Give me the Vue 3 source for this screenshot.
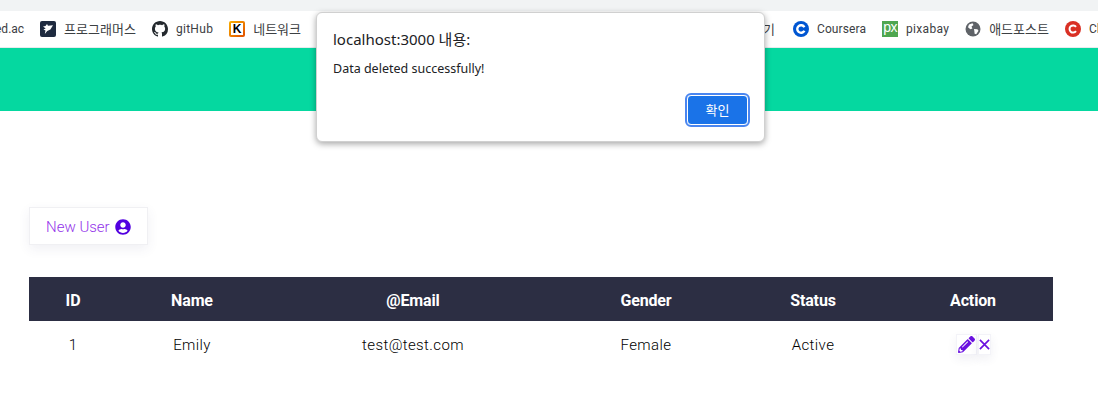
<script setup>
const leftMarks = [
  { icon: 'prog', label: '프로그래머스' },
  { icon: 'github', label: 'gitHub' },
  { icon: 'k', label: '네트워크' },
]
const rightMarks = [
  { icon: 'coursera', label: 'Coursera' },
  { icon: 'px', label: 'pixabay' },
  { icon: 'globe', label: '애드포스트' },
  { icon: 'red', label: 'Cl' },
]
const columns = ['ID', 'Name', '@Email', 'Gender', 'Status', 'Action']
const users = [
  { id: 1, name: 'Emily', email: 'test@test.com', gender: 'Female', status: 'Active' },
]
function labelClass(m) {
  return { kr: /[가-힣]/.test(m.label), loose: m.icon === 'github' || m.icon === 'px', 'loose-sm': m.icon === 'coursera' }
}
</script>

<template>
  <div class="page">
    <div class="tabstrip"></div>

    <nav class="bookmarks">
      <span class="cut">ed.ac</span>
      <div class="mark" v-for="m in leftMarks" :key="m.label">
        <span class="fav">
          <svg v-if="m.icon === 'prog'" viewBox="0 0 16 16" width="16" height="16">
            <rect width="16" height="16" rx="2" fill="#1e2a3f" />
            <path d="M3 5.5l2.5-.6L7 3l1 1.8 5-.6-2.6 4.3-3.2 1.5-2.4 3 .7-3.4L3.4 8.4l2.3-.8z" fill="#fff" />
          </svg>
          <svg v-else-if="m.icon === 'github'" viewBox="0 0 16 16" width="16" height="16">
            <path fill="#24292e" d="M8 0C3.58 0 0 3.58 0 8c0 3.54 2.29 6.53 5.47 7.59.4.07.55-.17.55-.38 0-.19-.01-.82-.01-1.49-2.01.37-2.53-.49-2.69-.94-.09-.23-.48-.94-.82-1.13-.28-.15-.68-.52-.01-.53.63-.01 1.08.58 1.23.82.72 1.21 1.87.87 2.33.66.07-.52.28-.87.51-1.07-1.78-.2-3.64-.89-3.64-3.95 0-.87.31-1.59.82-2.15-.08-.2-.36-1.02.08-2.12 0 0 .67-.21 2.2.82.64-.18 1.32-.27 2-.27.68 0 1.36.09 2 .27 1.53-1.04 2.2-.82 2.2-.82.44 1.1.16 1.92.08 2.12.51.56.82 1.27.82 2.15 0 3.07-1.87 3.75-3.65 3.95.29.25.54.73.54 1.48 0 1.07-.01 1.93-.01 2.2 0 .21.15.46.55.38A8.013 8.013 0 0016 8c0-4.42-3.58-8-8-8z" />
          </svg>
          <span v-else class="fav-k">K</span>
        </span>
        <span :class="labelClass(m)">{{ m.label }}</span>
      </div>
      <span class="spacer"></span>
      <span class="cut-end kr">기</span>
      <div class="mark" v-for="m in rightMarks" :key="m.label">
        <span class="fav">
          <svg v-if="m.icon === 'coursera'" viewBox="0 0 16 16" width="16" height="16">
            <circle cx="8" cy="8" r="8" fill="#0056d2" />
            <path d="M11.4 9.8a3.8 3.8 0 1 1 0-3.6" fill="none" stroke="#fff" stroke-width="2.4" />
          </svg>
          <span v-else-if="m.icon === 'px'" class="fav-px">px</span>
          <svg v-else-if="m.icon === 'globe'" viewBox="0 0 16 16" width="16" height="16">
            <circle cx="8" cy="8" r="7.5" fill="#5f6368" />
            <path d="M4 3.5l3.5-1.2 1 1.7-2 1.6.9 1.8-2 .8-2.4-2zM9 8l3.4.3 1.1 1.5-2.3 3.4-1.6-.4-.2-2.3z" fill="#fff" />
          </svg>
          <svg v-else viewBox="0 0 16 16" width="16" height="16">
            <circle cx="8" cy="8" r="8" fill="#d93025" />
            <path d="M11 10.2a3.6 3.6 0 1 1 0-4.4" fill="none" stroke="#fff" stroke-width="2" />
          </svg>
        </span>
        <span :class="labelClass(m)">{{ m.label }}</span>
      </div>
    </nav>

    <header class="banner"></header>

    <main class="content">
      <button class="new-user">
        New User
        <svg viewBox="0 0 496 512" width="16" height="16">
          <path fill="#5200e0" d="M248 8C111 8 0 119 0 256s111 248 248 248 248-111 248-248S385 8 248 8zm0 96c48.6 0 88 39.4 88 88s-39.4 88-88 88-88-39.4-88-88 39.4-88 88-88zm0 344c-58.7 0-111.3-26.6-146.5-68.2 18.8-35.4 55.6-59.8 98.5-59.8 2.4 0 4.8.4 7.1 1.1 13 4.2 26.6 6.9 40.9 6.9 14.3 0 28-2.7 40.9-6.9 2.3-.7 4.7-1.1 7.1-1.1 42.9 0 79.7 24.4 98.5 59.8C359.3 421.4 306.7 448 248 448z" />
        </svg>
      </button>

      <table class="users">
        <colgroup>
          <col style="width: 88px" />
          <col style="width: 150px" />
          <col style="width: 292px" />
          <col style="width: 174px" />
          <col style="width: 160px" />
          <col style="width: 160px" />
        </colgroup>
        <thead>
          <tr>
            <th v-for="c in columns" :key="c">{{ c }}</th>
          </tr>
        </thead>
        <tbody>
          <tr v-for="u in users" :key="u.id">
            <td>{{ u.id }}</td>
            <td>{{ u.name }}</td>
            <td>{{ u.email }}</td>
            <td>{{ u.gender }}</td>
            <td>{{ u.status }}</td>
            <td>
              <div class="actions">
                <button class="act edit">
                  <svg viewBox="0 0 512 512" width="17" height="17">
                    <path fill="#6a11e0" d="M497.9 142.1l-46.1 46.1c-4.7 4.7-12.3 4.7-17 0l-111-111c-4.7-4.7-4.7-12.3 0-17l46.1-46.1c18.7-18.7 49.1-18.7 67.9 0l60.1 60.1c18.8 18.7 18.8 49.1 0 67.9zM284.2 99.8L21.6 362.4.4 483.9c-2.9 16.4 11.4 30.6 27.8 27.8l121.5-21.3 262.6-262.6c4.7-4.7 4.7-12.3 0-17l-111-111c-4.8-4.7-12.4-4.7-17.1 0zM124.1 339.9c-5.5-5.5-5.5-14.3 0-19.8l154-154c5.5-5.5 14.3-5.5 19.8 0s5.5 14.3 0 19.8l-154 154c-5.5 5.5-14.3 5.5-19.8 0zM88 424h48v36.3l-64.5 11.3-31.1-31.1L51.7 376H88v48z" />
                  </svg>
                </button>
                <button class="act del">
                  <svg viewBox="0 0 12 12" width="11" height="11">
                    <path d="M1 1l10 10M11 1L1 11" stroke="#6a11e0" stroke-width="1.8" fill="none" />
                  </svg>
                </button>
              </div>
            </td>
          </tr>
        </tbody>
      </table>
    </main>

    <div class="dialog">
      <div class="dialog-title">localhost:3000 내용:</div>
      <div class="dialog-msg">Data deleted successfully!</div>
      <div class="dialog-foot">
        <button class="ok">확인</button>
      </div>
    </div>
  </div>
</template>

<style>
html, body {
  margin: 0;
  background: #fff;
  overflow: hidden;
}
</style>

<style scoped>
.page {
  position: relative;
  width: 1098px;
  height: 420px;
  overflow: hidden;
  font-family: 'Roboto', 'Noto Sans CJK KR', sans-serif;
  color: #212529;
}
.tabstrip {
  height: 11px;
  background: #f1f3f4;
}
.bookmarks {
  display: flex;
  align-items: center;
  gap: 16px;
  height: 37px;
  padding-bottom: 1px;
  box-sizing: border-box;
  border-bottom: 1px solid #e8eaed;
  font-size: 12px;
  color: #3c4043;
  white-space: nowrap;
}
.kr {
  font-size: 13px;
}
.loose {
  letter-spacing: 0.3px;
}
.loose-sm {
  letter-spacing: 0.1px;
}
.cut {
  margin-left: -5px;
}
.spacer {
  flex: none;
  width: 430px;
}
.cut-end {
  margin-right: 2px;
}
.mark {
  display: flex;
  flex: none;
  align-items: center;
  gap: 8px;
}
.fav {
  width: 16px;
  height: 16px;
  display: block;
  flex: none;
}
.fav svg {
  display: block;
}
.fav-k {
  display: block;
  width: 16px;
  height: 16px;
  box-sizing: border-box;
  border: 2px solid transparent;
  border-radius: 2px;
  background: linear-gradient(#fff, #fff) padding-box, linear-gradient(135deg, #f9b000, #e04e00) border-box;
  color: #000;
  font: 700 12px/12px 'Liberation Sans', sans-serif;
  text-align: center;
}
.fav-px {
  display: block;
  width: 16px;
  height: 16px;
  background: #4ea64f;
  color: #fff;
  font: 400 14px/13px 'Liberation Sans', sans-serif;
  letter-spacing: -0.5px;
  text-align: center;
}
.banner {
  height: 63px;
  background: #05d8a0;
}
.content {
  padding: 96px 45px 0 29px;
}
.new-user {
  display: flex;
  align-items: center;
  gap: 5px;
  width: 119px;
  height: 38px;
  padding: 1px 0 0 16px;
  background: #fff;
  border: 1px solid #f0f0f3;
  box-shadow: 0 4px 12px rgba(60, 70, 120, 0.08);
  color: #9333ea;
  font: 300 15px 'Roboto', sans-serif;
}
.users {
  margin-top: 32px;
  width: 1024px;
  table-layout: fixed;
  border-collapse: collapse;
  font-size: 15px;
  text-align: center;
}
.users th {
  height: 44px;
  padding: 2px 0 0;
  box-sizing: border-box;
  background: #2c2e43;
  color: #fff;
  font-weight: 700;
  font-size: 16px;
  letter-spacing: -0.15px;
}
.users td {
  height: 46px;
  padding: 1px 0 0;
  letter-spacing: 0.4px;
  font-weight: 300;
  color: #000;
}
.actions {
  display: flex;
  justify-content: center;
  align-items: center;
  gap: 1px;
  margin-top: -1px;
}
.act {
  display: flex;
  align-items: center;
  justify-content: center;
  height: 21px;
  padding: 0;
  background: #fff;
  border: 1px solid #f3f3f8;
  box-shadow: 0 4px 10px rgba(60, 70, 120, 0.08);
}
.edit {
  width: 21px;
}
.del {
  width: 13px;
}
.dialog {
  position: absolute;
  left: 316px;
  top: 12px;
  width: 449px;
  height: 130px;
  box-sizing: border-box;
  padding: 17px 16px 0;
  background: #fff;
  border-radius: 6px;
  border: 1px solid #d0d0d0;
  box-shadow: 0 2px 6px rgba(0, 0, 0, 0.35);
  font-family: 'Noto Sans', 'Noto Sans CJK KR', sans-serif;
  color: #202124;
}
.dialog-title {
  font-size: 15px;
  line-height: 19px;
}
.dialog-msg {
  margin-top: 11px;
  font-size: 12.5px;
  line-height: 18px;
}
.dialog-foot {
  display: flex;
  justify-content: flex-end;
  margin-top: 17px;
}
.ok {
  width: 61px;
  height: 30px;
  padding: 0 0 1px;
  background: #1a73e8;
  color: #fff;
  border: 1px solid #fff;
  border-radius: 4px;
  outline: 2px solid #4a86f0;
  font: 400 13px 'Noto Sans', 'Noto Sans CJK KR', sans-serif;
}
</style>
